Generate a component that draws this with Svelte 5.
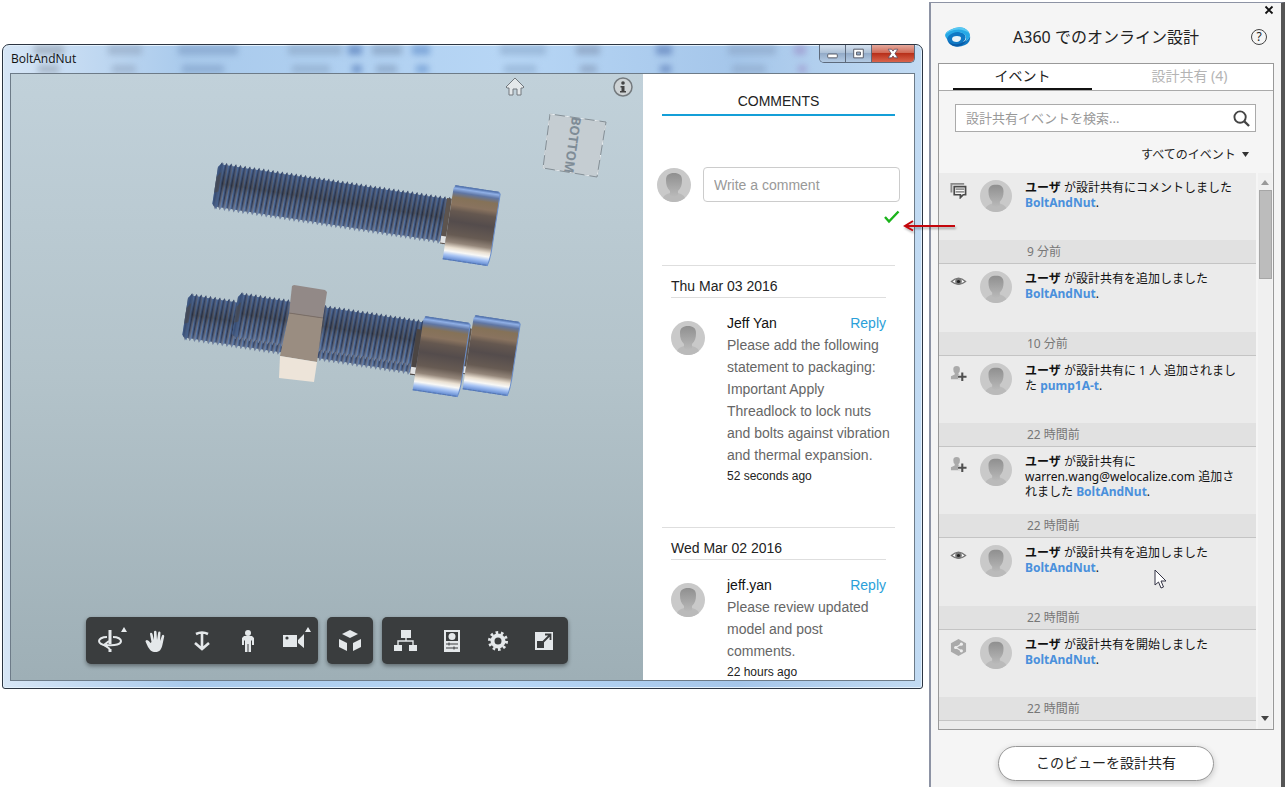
<script lang="ts">
	type Comment = { date: string; author: string; lines: string; ago: string };
	type Event = { icon: 'comment' | 'eye' | 'person' | 'share'; text: string; link: string; ago: string };

	const comments: Comment[] = [
		{
			date: 'Thu Mar 03 2016',
			author: 'Jeff Yan',
			lines:
				'Please add the following\nstatement to packaging:\nImportant Apply\nThreadlock to lock nuts\nand bolts against vibration\nand thermal expansion.',
			ago: '52 seconds ago'
		},
		{
			date: 'Wed Mar 02 2016',
			author: 'jeff.yan',
			lines: 'Please review updated\nmodel and post\ncomments.',
			ago: '22 hours ago'
		}
	];

	const events: Event[] = [
		{ icon: 'comment', text: 'が設計共有にコメントしました\n', link: 'BoltAndNut', ago: '9 分前' },
		{ icon: 'eye', text: 'が設計共有を追加しました\n', link: 'BoltAndNut', ago: '10 分前' },
		{ icon: 'person', text: 'が設計共有に 1 人 追加されまし\nた ', link: 'pump1A-t', ago: '22 時間前' },
		{
			icon: 'person',
			text: 'が設計共有に\nwarren.wang@welocalize.com 追加さ\nれました ',
			link: 'BoltAndNut',
			ago: '22 時間前'
		},
		{ icon: 'eye', text: 'が設計共有を追加しました\n', link: 'BoltAndNut', ago: '22 時間前' },
		{ icon: 'share', text: 'が設計共有を開始しました\n', link: 'BoltAndNut', ago: '22 時間前' }
	];

	const toolGroups = [
		[
			{ id: 'orbit', label: 'Orbit', more: true },
			{ id: 'pan', label: 'Pan', more: false },
			{ id: 'zoom', label: 'Zoom', more: false },
			{ id: 'walk', label: 'First person', more: false },
			{ id: 'camera', label: 'Camera', more: true }
		],
		[{ id: 'explode', label: 'Explode', more: false }],
		[
			{ id: 'tree', label: 'Model structure', more: false },
			{ id: 'props', label: 'Properties', more: false },
			{ id: 'settings', label: 'Settings', more: false },
			{ id: 'full', label: 'Full screen', more: false }
		]
	];

	// thread outline: one tooth per turn along the top and bottom edge
	const PITCH = 4.7;
	const TURNS = 50;
	function threadOutline() {
		let top = '';
		let bottom = '';
		for (let i = 0; i < TURNS; i++) {
			const x = -235 + i * PITCH;
			top += `L${x + 1} 15L${x + 2.4} 12.5L${x + 3.8} 15`;
			bottom = `L${x + 3.8} 57.5L${x + 2.4} 60.5L${x + 1} 57.5` + bottom;
		}
		return `M-236 18${top}${bottom}L-236 55Z`;
	}
	const thread = threadOutline();

	const blobs = [
		{ x: 24, w: 30, c: '#8f9cac' },
		{ x: 98, w: 34, c: '#92a6c0' },
		{ x: 168, w: 60, c: '#7d9cc4' },
		{ x: 278, w: 54, c: '#8aa5c4' },
		{ x: 338, w: 14, c: '#4d74b4' },
		{ x: 362, w: 30, c: '#7f98b8' },
		{ x: 402, w: 18, c: '#5f8dca' },
		{ x: 490, w: 46, c: '#8ba9cb' },
		{ x: 566, w: 24, c: '#8296b4' },
		{ x: 646, w: 16, c: '#5577b4' },
		{ x: 718, w: 48, c: '#8ba5c6' },
		{ x: 784, w: 12, c: '#9a8fc8' }
	];

	let comment = $state('');
	let query = $state('');
	let tab = $state(0);
</script>

{#snippet avatar()}
	<svg class="avatar" viewBox="0 0 34 34" aria-hidden="true">
		<circle cx="17" cy="17" r="17" fill="#c9c9c9" />
		<path d="M6 30c1-3 4-4 7-5l1-3h6l1 3c3 1 6 2 7 5a17 17 0 0 1-22 0z" fill="#bababa" />
		<path d="M17 5c5 0 8 2 8 7 0 5-1 8-4 11v4l-4 2-4-2v-4c-3-3-4-6-4-11 0-5 3-7 8-7z" fill="url(#face)" />
	</svg>
{/snippet}

{#snippet head()}
	<path d="M2 0H45L47 2V58Q47 68 45 75H0V3Z" fill="url(#steel)" />
	<path d="M45 0L47 2V58Q47 68 45 75" fill="none" stroke="#6b8fcb" stroke-width="1" />
	<path d="M1 .5H45M0 74.5H45" stroke="#5878b0" stroke-width="1" stroke-dasharray="4 1" />
{/snippet}

{#snippet shank()}
	<path d={thread} fill="url(#turns)" />
	<path d={thread} fill="url(#shade)" />
	<path d="M-236 18L-231 13V60L-236 55Z" fill="#3c5580" opacity=".7" />
	<path d="M-236 28L-232 22V42L-236 44Z" fill="#4c4a4a" opacity=".6" />
	<path d="M-5 14H0V60H-5Z" fill="#5d544e" />
	<path d="M-5 52H0V59H-5Z" fill="#e2e3e4" />
{/snippet}

{#snippet toolIcon(id: string)}
	<svg class="tool-icon" viewBox="0 0 24 24" aria-hidden="true">
		{#if id === 'orbit'}
			<path d="M12 1v14M12 20v3" stroke-width="3" />
			<path d="M9 8C4 8 1 10 1 12s3 4 9 5M15 8c5 0 8 2 8 4 0 3-5 5-15 4" stroke-width="2" />
			<path d="M11 12l-5 4 6 4" stroke-width="2" />
		{:else if id === 'pan'}
			<path
				class="solid"
				d="M7.500 13L6 5q0-1.300 1-1.300T8.500 5L10 11 10 3q0-1.300 1.200-1.300T12.500 3l.5 8 1.200-7.500q.2-1.200 1.300-1t1 1.300L16 12l2-5.500q.7-1 1.600-.5t.6 1.500l-1.700 8c-1 5-3 7.500-7 7.500-4 0-5.500-2-7.500-5L1.500 12.500q-.2-1.500 1.500-1.500 2 .3 3.500 3z"
			/>
		{:else if id === 'zoom'}
			<path d="M6 5q6-3 12 0M12 4v15M5 14l7 6 7-6" stroke-width="2.6" />
		{:else if id === 'walk'}
			<circle class="solid" cx="12" cy="4" r="3" />
			<path class="solid" d="M8 7h8l2 2v7h-2v-5l-1 1v11h-2.500v-8h-1v8H9V12l-1-1v5H6V9z" />
		{:else if id === 'camera'}
			<path class="solid" d="M1 6h14v12H1zM16 11l6-6v14l-6-5z" />
			<circle cx="5" cy="9" r="1.6" fill="#3a3d3e" stroke="none" />
		{:else if id === 'explode'}
			<path class="solid" d="M12 1l8 4-8 4-8-4zM1 10l8 4v8l-8-4zM23 10l-8 4v8l8-4z" />
		{:else if id === 'tree'}
			<path class="solid" d="M7 1h10v8H7zM0 16h8v6H0zM15 16h8v6h-8z" />
			<path d="M12 9v3M4 16v-4h15v4" stroke-width="1.4" />
		{:else if id === 'props'}
			<path class="solid" d="M4 1h16v22H4z" />
			<path d="M6 3h12v9H6z" fill="#3a3d3e" stroke="none" />
			<circle class="solid" cx="12" cy="7.500" r="3.500" />
			<path class="dark" d="M6 15h12M6 19h12M9 13.500v3M14 17.500v3" />
		{:else if id === 'settings'}
			<circle cx="12" cy="12" r="5.500" stroke-width="4" />
			<circle cx="12" cy="12" r="8.500" stroke-width="3" stroke-dasharray="2.600 2.740" />
		{:else}
			<path class="solid" d="M3 3h18v18H3z" />
			<path d="M5 12h7v7H5z" fill="#3a3d3e" stroke="none" />
			<path class="dark" d="M11 13l7-7M13 5.500h5.500V11" stroke-width="1.8" />
		{/if}
	</svg>
{/snippet}

{#snippet eventIcon(icon: Event['icon'])}
	<svg class="event-icon" viewBox="0 0 18 18" aria-hidden="true">
		{#if icon === 'comment'}
			<path d="M1.500 11V2H15" fill="none" stroke="#8a8a8a" stroke-width="2" />
			<path d="M4.500 5h12v8.500H14l-3 3v-3H4.500z" fill="#f5f5f5" stroke="#4a4a4a" stroke-width="1.800" />
			<path d="M6 7.500h9M6 10.500h9" stroke="#444" />
		{:else if icon === 'eye'}
			<path d="M1.500 9q7.500-7 15 0-7.500 6-15 0z" fill="#fff" stroke="#777" stroke-width="1.400" />
			<circle cx="9" cy="9" r="3.500" fill="#777" />
			<circle cx="9" cy="9" r="1.700" fill="#222" />
		{:else if icon === 'person'}
			<path d="M3.500 4.500q0-3.500 3.500-3.500t3.500 3.500-1.500 4v1.500l3 1.500v3.500H1v-3l4-2V8.500q-1.500-1-1.500-4z" fill="#aaa" />
			<path d="M13 8v9M8.500 12.500h9" stroke="#ebebeb" stroke-width="4" />
			<path d="M13 8v9M8.500 12.500h9" stroke="#505050" stroke-width="2.200" />
		{:else}
			<path d="M9 0l8 4.500v9L9 18l-8-4.500v-9z" fill="#aaa" />
			<path d="M12 5.500L6 9l6 3.500" fill="none" stroke="#eee" stroke-width="1.300" />
			<circle cx="12" cy="5.500" r="1.700" fill="#eee" />
			<circle cx="6" cy="9" r="1.700" fill="#eee" />
			<circle cx="12" cy="12.500" r="1.700" fill="#eee" />
		{/if}
	</svg>
{/snippet}

<main class="page">
	<section class="window">
		<header class="titlebar">
			<svg class="glass" aria-hidden="true">
				{#each blobs as b (b.x)}
					<rect x={b.x} y="0" width={b.w} height="10" fill={b.c} />
					<rect x={b.x + 4} y="20" width={b.w * 0.7} height="8" fill={b.c} />
				{/each}
			</svg>
			<h1>BoltAndNut</h1>
			<div class="controls">
				<button aria-label="Minimize">
					<svg viewBox="0 0 26 18"><rect x="8" y="9" width="10" height="4" rx="1" fill="#fff" stroke="#555a66" /></svg>
				</button>
				<button aria-label="Maximize">
					<svg viewBox="0 0 26 18"><path d="M8 4h10v9H8zM11 7v3h4V7z" fill="#fff" fill-rule="evenodd" stroke="#555a66" /></svg>
				</button>
				<button class="close" aria-label="Close">
					<svg viewBox="0 0 44 18"><path d="M17 4h3.500l1.500 2 1.500-2H27l-3 4.500 3 4.500h-3.500L22 11l-1.500 2H17l3-4.500z" fill="#fff" stroke="#554a5c" stroke-width=".8" /></svg>
				</button>
			</div>
		</header>

		<div class="client">
			<div class="viewer">
				<svg class="model" viewBox="0 0 632 606" aria-label="BoltAndNut model">
					<defs>
						<linearGradient id="steel" x1="0" y1="0" x2="0" y2="1">
							<stop offset="0" stop-color="#4869a5" />
							<stop offset=".04" stop-color="#90b0e6" />
							<stop offset=".09" stop-color="#5f76a4" />
							<stop offset=".16" stop-color="#857258" />
							<stop offset=".26" stop-color="#89735f" />
							<stop offset=".34" stop-color="#655850" />
							<stop offset=".48" stop-color="#544c4c" />
							<stop offset=".66" stop-color="#675b53" />
							<stop offset=".76" stop-color="#94867a" />
							<stop offset=".83" stop-color="#eae0d2" />
							<stop offset=".88" stop-color="#f8f8f6" />
							<stop offset=".93" stop-color="#a9c5f4" />
							<stop offset="1" stop-color="#5a83cd" />
						</linearGradient>
						<linearGradient id="shade" x1="0" y1="0" x2="0" y2="1">
							<stop offset="0" stop-color="#3f62a0" stop-opacity=".4" />
							<stop offset=".45" stop-color="#24262c" stop-opacity=".4" />
							<stop offset=".75" stop-color="#4465a0" stop-opacity=".1" />
							<stop offset="1" stop-color="#8fabd8" stop-opacity=".4" />
						</linearGradient>
						<linearGradient id="face" x1="0" y1="0" x2="0" y2="1">
							<stop offset="0" stop-color="#8f8f8f" />
							<stop offset="1" stop-color="#bababa" />
						</linearGradient>
						<pattern id="turns" width={PITCH} height="80" x="-235" patternUnits="userSpaceOnUse" patternTransform="skewX(-2)">
							<rect width="5" height="80" fill="#5877a6" />
							<rect x="1.400" width="2" height="80" fill="#28324a" />
							<rect x="3.400" width="1" height="80" fill="#76695f" />
						</pattern>
					</defs>
					<g transform="translate(443 111) rotate(8.700)">{@render shank()}{@render head()}</g>
					<g transform="translate(413 242) rotate(8.700)">{@render shank()}</g>
					<g transform="translate(463 241) rotate(8.700)">{@render shank()}{@render head()}</g>
					<g transform="translate(413 242) rotate(8.700)">
						<path d="M-5 14H0V60H-5Z" fill="#4b4543" />
						<path d="M-5 52H0V59H-5Z" fill="#e2e3e4" />
						{@render head()}
					</g>
					<path d="M281 212l2-1 31 5 2 2-4 26-34-5z" fill="#928987" />
					<path d="M278 239l34 5-6 44-37-6z" fill="#9a8d81" />
					<path d="M269 282l37 6-3 20-35-4z" fill="#ede4d9" />
					<path d="M278 239l34 5" stroke="#7b6e66" />

					<path class="home" d="M495 13l9-9 9 9-1 1h-2v7h-4v-6h-4v6h-4v-7h-2z" />
					<g transform="translate(612 13)">
						<circle r="9" fill="#ced3d5" stroke="#747a7e" stroke-width="1.500" />
						<circle cy="-4" r="1.800" fill="#444" />
						<path d="M-2.500-1H1.500V4H3V5.500H-3V4H-1.500V.5H-2.500z" fill="#444" />
					</g>
					<path d="M539 40l56 8-9 55-54-9z" fill="#c5cdd2" stroke="#858f96" />
					<path d="M539 40l56 8-9 55-54-9z" fill="none" stroke="#e9eef1" stroke-dasharray="5 10" />
					<text class="face" transform="translate(562 71) rotate(98)" text-anchor="middle" dominant-baseline="central">BOTTOM</text>
				</svg>

				<div class="toolbar">
					{#each toolGroups as group, gi (gi)}
						<div class="tools">
							{#each group as tool (tool.id)}
								<button aria-label={tool.label} class:more={tool.more}>{@render toolIcon(tool.id)}</button>
							{/each}
						</div>
					{/each}
				</div>
			</div>

			<aside class="comments">
				<h2>COMMENTS</h2>
				<form class="composer">
					{@render avatar()}
					<input type="text" aria-label="Write a comment" placeholder="Write a comment" bind:value={comment} />
				</form>
				<svg class="check" viewBox="0 0 16 14" aria-hidden="true">
					<path d="M1 7l4 4.500L14.500 1.500" fill="none" stroke="#1bb31b" stroke-width="2.400" />
				</svg>
				{#each comments as c (c.date)}
					<section class="day">
						<h3>{c.date}</h3>
						<article>
							{@render avatar()}
							<div class="body">
								<div class="who">
									<span>{c.author}</span>
									<a href="#reply">Reply</a>
								</div>
								<p>{c.lines}</p>
								<time>{c.ago}</time>
							</div>
						</article>
					</section>
				{/each}
			</aside>
		</div>

		<svg class="pointer" viewBox="0 0 54 14" aria-hidden="true">
			<path d="M3 7h50M11 2L3 7l8 4.500" fill="none" stroke="#c4060c" stroke-width="2" />
		</svg>
	</section>

	<aside class="panel">
		<div class="panel-top">
			<button class="dismiss" aria-label="閉じる">
				<svg viewBox="0 0 10 10"><path d="M1.500 1.500l7 7M8.500 1.500l-7 7" stroke="#111" stroke-width="1.800" /></svg>
			</button>
		</div>
		<header class="panel-head">
			<svg class="logo" viewBox="0 0 26 20" aria-hidden="true">
				<path d="M2 12Q1 6 9 5q8-1 11 3 2 4-2 7 5-1 7-6 1 6-5 9-6 3-12 1-5-2-6-7z" fill="#0f78c4" />
				<path d="M5 3Q12-1 19 1q6 3 6 8-1 4-5 5 2-3 0-6Q15 3 8 6 3 8 2 12-3 7 5 3z" fill="#27a9e6" />
				<path d="M5 3Q12-1 19 1q4 2 5 5-7-5-15-3-5 1-8 4 1-3 4-4z" fill="#58c8f2" />
				<path d="M7 12q0-3 5-3 4 0 4 2 0 3-4 4-5 0-5-3z" fill="#e9f3f8" />
				<path d="M3 14q4 4 10 3 6-1 9-5-2 5-7 7-8 2-12-5z" fill="#0a5aa6" />
			</svg>
			<h2>A360 でのオンライン設計</h2>
			<button class="help" aria-label="ヘルプ">?</button>
		</header>

		<div class="box">
			<div class="tabs" role="tablist">
				<button role="tab" aria-selected={tab === 0} onclick={() => (tab = 0)}>イベント</button>
				<button role="tab" aria-selected={tab === 1} onclick={() => (tab = 1)}>設計共有 (4)</button>
			</div>
			<div class="search">
				<input type="text" aria-label="検索" placeholder="設計共有イベントを検索..." bind:value={query} />
				<svg viewBox="0 0 18 18" aria-hidden="true">
					<circle cx="7.500" cy="7.500" r="6" fill="none" stroke="#444" stroke-width="2" />
					<path d="M12 12l5 5" stroke="#444" stroke-width="2.400" />
				</svg>
			</div>
			<label class="filter">
				<select aria-label="フィルタ"><option>すべてのイベント</option></select>
				<svg viewBox="0 0 7 5" aria-hidden="true"><path d="M0 0h7L3.500 5z" fill="#333" /></svg>
			</label>

			<div class="feed">
				<ul>
					{#each events as e, i (i)}
						<li>
							<div class="event">
								{@render eventIcon(e.icon)}
								{@render avatar()}
								<p><b>ユーザ</b> {e.text}<a href="#design">{e.link}</a>.</p>
							</div>
							<time>{e.ago}</time>
							{#if i === 4}
								<svg class="cursor" viewBox="0 0 13 20" aria-hidden="true">
									<path d="M1 1v15l3.500-3 2.500 6 2.500-1-2.500-6H12z" fill="#fff" stroke="#334" />
								</svg>
							{/if}
						</li>
					{/each}
				</ul>
				<div class="scrollbar" aria-hidden="true">
					<svg viewBox="0 0 8 5"><path d="M0 5h8L4 0z" fill="#999" /></svg>
					<span></span>
					<svg class="down" viewBox="0 0 8 5"><path d="M0 0h8L4 5z" fill="#444" /></svg>
				</div>
			</div>
		</div>
		<button class="share">このビューを設計共有</button>
	</aside>
</main>

<style>
	:global(body) {
		margin: 0;
		background: #fff;
	}
	.page,
	.page * {
		box-sizing: border-box;
	}
	.page {
		display: flex;
		align-items: flex-start;
		gap: 6px;
		padding-left: 2px;
		min-height: 100vh;
		font-family: 'Noto Sans', 'Noto Sans CJK JP', sans-serif;
		font-size: 12px;
		color: #222;
	}
	h1,
	h2,
	h3,
	p,
	ul {
		margin: 0;
		padding: 0;
		font-weight: 400;
	}
	ul {
		list-style: none;
	}
	button {
		margin: 0;
		padding: 0;
		border: 0;
		background: none;
		font: inherit;
		color: inherit;
	}
	svg {
		display: block;
	}
	a {
		text-decoration: none;
	}

	/* window frame */
	.window {
		position: relative;
		flex: 1;
		min-width: 0;
		margin-top: 44px;
		padding: 0 7px 7px;
		border: 1px solid #2c3542;
		border-radius: 7px 7px 3px 3px;
		background: linear-gradient(90deg, #d7e6f6 0, #a9caec 20%, #b7d6f5 55%, #a5c6ea 80%, #c2dbf3 100%);
		box-shadow: inset 0 0 0 1px #e4f1fc;
	}
	.titlebar {
		position: relative;
		display: flex;
		justify-content: space-between;
		height: 28px;
		overflow: hidden;
	}
	.glass {
		position: absolute;
		inset: 0;
		width: 100%;
		height: 28px;
		filter: blur(3px);
		opacity: 0.6;
	}
	h1 {
		position: relative;
		padding-left: 1px;
		font-family: 'Open Sans', sans-serif;
		font-size: 12px;
		line-height: 27px;
		color: #111;
	}
	.controls {
		position: relative;
		display: flex;
		height: 18px;
		border: 1px solid #5d6a7c;
		border-top: 0;
		border-radius: 0 0 5px 5px;
		overflow: hidden;
	}
	.controls button {
		width: 26px;
		background: linear-gradient(#d5e2f0, #a9bdd4 50%, #93abc8 50%, #b4cbe4);
		border-right: 1px solid #5d6a7c;
	}
	.controls .close {
		width: 42px;
		border: 0;
		background: linear-gradient(#e5a99d, #cf6753 48%, #b8301a 50%, #d9644c);
	}
	.controls svg {
		width: 100%;
		height: 18px;
	}
	.client {
		display: grid;
		grid-template-columns: 1fr 271px;
		border: 1px solid #6d7b88;
	}
	.viewer {
		position: relative;
		overflow: hidden;
		background: linear-gradient(#c1d1da, #b3c3ca 50%, #9eafb6);
	}
	.model {
		width: 632px;
		height: 606px;
	}
	.home {
		fill: #e4e8ea;
		stroke: #72797e;
	}
	.face {
		font: 700 13px 'Open Sans', sans-serif;
		fill: #7f8c97;
	}
	.toolbar {
		position: absolute;
		right: 0;
		bottom: 16px;
		left: 0;
		display: flex;
		justify-content: center;
		gap: 9px;
	}
	.tools {
		display: flex;
		padding: 0 1px;
		border-radius: 5px;
		background: #3a3d3e;
		box-shadow: 0 2px 4px rgb(0 0 0 / 0.4);
	}
	.tools:nth-child(2) {
		padding: 0;
	}
	.tools button {
		position: relative;
		display: grid;
		place-items: center;
		width: 46px;
		height: 47px;
	}
	.tools .more::after {
		content: '';
		position: absolute;
		top: 10px;
		right: 6px;
		border: 3px solid transparent;
		border-top: 0;
		border-bottom: 5px solid #e8ecee;
	}
	.tool-icon {
		width: 24px;
		height: 24px;
		fill: none;
		stroke: #e4e8ea;
	}
	.solid {
		fill: #e4e8ea;
		stroke: none;
	}
	.dark {
		stroke: #3a3d3e;
	}

	/* comments */
	.comments {
		padding-top: 17px;
		background: #fff;
		font-family: 'Liberation Sans', Arial, sans-serif;
		font-size: 14px;
	}
	.comments h2 {
		margin: 0 19px;
		padding-bottom: 3px;
		border-bottom: 2px solid #149fd8;
		font-size: 14px;
		line-height: 20px;
		text-align: center;
	}
	.composer {
		display: flex;
		align-items: center;
		gap: 12px;
		margin: 51px 14px 8px;
	}
	.avatar {
		flex: none;
		width: 34px;
		height: 34px;
	}
	.composer input {
		flex: 1;
		min-width: 0;
		height: 35px;
		padding: 0 10px;
		border: 1px solid #ccc;
		border-radius: 4px;
		font: inherit;
	}
	input::placeholder {
		color: #999;
		opacity: 1;
	}
	.check {
		width: 16px;
		height: 14px;
		margin: 0 14px 41px auto;
	}
	.day {
		margin: 0 19px 43px;
		padding: 10px 9px 0;
		border-top: 1px solid #dedede;
	}
	.day:last-child {
		margin-bottom: 0;
	}
	h3 {
		padding-bottom: 1px;
		border-bottom: 1px solid #dedede;
		font-size: 14px;
		line-height: 20px;
	}
	article {
		display: flex;
		gap: 22px;
		padding-top: 14px;
	}
	article .avatar {
		margin-top: 9px;
	}
	.body {
		flex: 1;
		min-width: 0;
		line-height: 22px;
	}
	.who {
		display: flex;
		justify-content: space-between;
		color: #111;
	}
	.who a {
		color: #2b9fd9;
	}
	.body p {
		color: #666;
		white-space: pre;
	}
	.body time {
		display: block;
		padding-top: 2px;
		font-size: 12px;
		line-height: 16px;
	}
	.pointer {
		position: absolute;
		top: 174px;
		right: -34px;
		z-index: 2;
		width: 54px;
		height: 14px;
		filter: drop-shadow(1px 2px 1px rgb(0 0 0 / 0.3));
	}

	/* design share panel */
	.panel {
		display: flex;
		flex: 0 0 356px;
		flex-direction: column;
		height: calc(100vh - 2px);
		min-height: 640px;
		margin-top: 2px;
		padding: 0 7px 6px;
		border: solid #8d93a4;
		border-width: 1px 4px 0 2px;
		border-right-color: #555;
		background: #f5f5f5;
	}
	.panel-top {
		display: flex;
		align-items: flex-end;
		justify-content: flex-end;
		height: 12px;
	}
	.dismiss svg {
		width: 10px;
		height: 10px;
	}
	.panel-head {
		display: grid;
		grid-template-columns: 26px 1fr 26px;
		align-items: center;
		height: 44px;
		margin-bottom: 4px;
		padding: 0 7px;
	}
	.logo {
		width: 26px;
		height: 20px;
	}
	.panel h2 {
		font-size: 16px;
		line-height: 20px;
		text-align: center;
	}
	.help {
		justify-self: end;
		width: 16px;
		height: 16px;
		border: 1px solid #444;
		border-radius: 50%;
		font-size: 12px;
		line-height: 14px;
	}
	.box {
		display: flex;
		flex: 1;
		flex-direction: column;
		min-height: 0;
		border: 1px solid #999;
	}
	.tabs {
		display: grid;
		grid-template-columns: 1fr 1fr;
		height: 27px;
		padding: 0;
		border-bottom: 1px solid #aaa;
		background: #fff;
		font-size: 14px;
	}
	.tabs button {
		margin: 0 14px;
		border-bottom: 2px solid transparent;
		line-height: 20px;
		color: #b4b4b4;
	}
	.tabs button[aria-selected='true'] {
		border-color: #111;
		color: #222;
	}
	.search {
		display: flex;
		align-items: center;
		height: 28px;
		margin: 13px 17px 12px 16px;
		padding-right: 5px;
		border: 1px solid #aaa;
		background: #fff;
	}
	.search input {
		flex: 1;
		min-width: 0;
		padding: 0 10px;
		border: 0;
		outline: 0;
		background: none;
		font: inherit;
		font-size: 13px;
	}
	.search svg {
		width: 17px;
		height: 17px;
	}
	.filter {
		display: flex;
		align-items: center;
		align-self: flex-end;
		gap: 4px;
		height: 20px;
		margin: 0 24px 9px 0;
	}
	select {
		padding: 0;
		border: 0;
		appearance: none;
		background: none;
		font: inherit;
		color: #222;
	}
	.filter svg {
		width: 7px;
		height: 5px;
	}
	.feed {
		display: grid;
		flex: 1;
		grid-template-columns: 1fr 14px;
		gap: 2px;
		min-height: 0;
		padding-right: 1px;
	}
	ul {
		display: grid;
		grid-auto-rows: 1fr;
		padding-bottom: 8px;
		background: #ebebeb;
	}
	li {
		position: relative;
		display: flex;
		flex-direction: column;
		border-bottom: 1px solid #c4c4c4;
	}
	.event {
		display: flex;
		flex: 1;
		align-items: flex-start;
		gap: 13px;
		padding: 7px 0 0 11px;
	}
	.event-icon {
		width: 17px;
		height: 17px;
		margin-top: 2px;
	}
	.event .avatar {
		width: 32px;
		height: 32px;
	}
	.event p {
		line-height: 15px;
		white-space: pre;
		color: #111;
	}
	b {
		font-weight: 700;
	}
	.event a {
		font-weight: 700;
		color: #4a90dc;
	}
	li time {
		padding-left: 88px;
		background: #e1e1e1;
		line-height: 23px;
		color: #777;
	}
	.cursor {
		position: absolute;
		top: 31px;
		left: 215px;
		width: 13px;
		height: 20px;
	}
	.scrollbar {
		display: flex;
		flex-direction: column;
		align-items: center;
		padding: 7px 0 8px;
		background: #f0f0f0;
	}
	.scrollbar svg {
		width: 8px;
		height: 5px;
	}
	.scrollbar span {
		width: 13px;
		height: 89px;
		margin-top: 5px;
		border: 1px solid #a6a6a6;
		background: #bcbcbc;
	}
	.scrollbar .down {
		margin-top: auto;
	}
	.share {
		align-self: center;
		width: 216px;
		height: 35px;
		margin-top: 16px;
		padding-bottom: 3px;
		border: 1px solid #999;
		border-radius: 18px;
		background: #fff;
		box-shadow: 0 2px 6px rgb(0 0 0 / 0.2);
		font-size: 14px;
	}
</style>
